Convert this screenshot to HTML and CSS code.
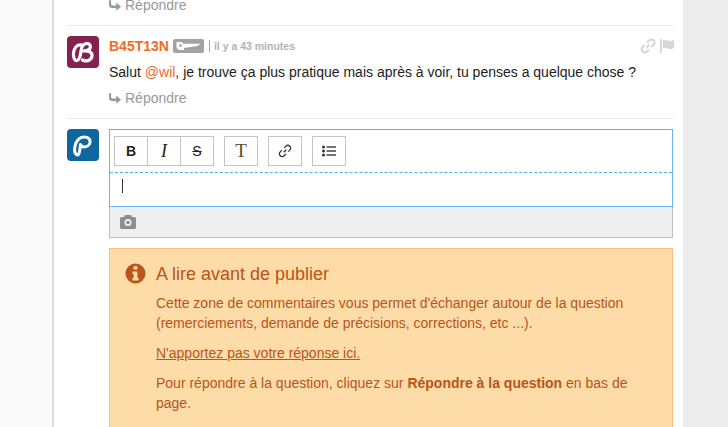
FILE: index.html
```html
<!DOCTYPE html>
<html lang="fr">
<head>
<meta charset="utf-8">
<title>Commentaires</title>
<link rel="stylesheet" href="styles.css">
</head>
<body>
<div class="page">
  <div class="gutter"></div>
  <main class="main">
    <div class="prev-reply">
      <a class="reply"><svg class="reply-icon" viewBox="0 0 14 12"><path d="M0 0h2.500v4.500q0 1.500 1.500 1.500h4.500V2.500L14 7.500l-5.500 4.500V8.800H3.500Q0 8.800 0 5.500z"/></svg>Répondre</a>
    </div>
    <article class="comment">
      <svg class="avatar" viewBox="0 0 32 32">
        <rect width="32" height="32" rx="4" fill="#85204f"/>
        <path d="M15 9C10 8 7 12 6.500 17 6 22 8 25 10 24.500c3-.5 3.500-5.500 4-9.500.5-4 2-7.500 6-7.500s4.500 5 1 6.500c-1.500.8-3 1-4.500 1 4.500-.2 9 .5 8.500 5-.5 4.500-6 6-9.500 4" fill="none" stroke="#fff" stroke-width="3.200" stroke-linecap="round" stroke-linejoin="round"/>
      </svg>
      <div class="body">
        <div class="meta">
          <span class="author">B45T13N</span>
          <span class="badge"><svg class="saw" viewBox="0 0 24 8"><path d="M0 0h6v1.800h18L21 4 7.500 6v2H1.500V6.500H0zM3 2v3h2V2z" fill="#fff" fill-rule="evenodd"/></svg></span>
          <span class="sep"></span>
          <span class="time">il y a 43 minutes</span>
          <span class="actions">
            <svg class="act" viewBox="0 0 16 16"><path d="M6.500 9.500l3-3M7 4.500l2-2a3 3 0 0 1 4.500 4.500l-2 2M9 11.500l-2 2A3 3 0 0 1 2.500 9l2-2" fill="none" stroke="#d5d8d5" stroke-width="2"/></svg>
            <svg class="act" viewBox="0 0 16 16"><path d="M1 1h1.800v14H1zM3.800 2c3-1 4.500 1 7 1 1.500 0 3-.5 4.200-1v8c-1 .500-2.700 1-4.200 1-2.500 0-4-2-7-1z" fill="#d5d8d5"/></svg>
          </span>
        </div>
        <p class="text">Salut <a class="mention">@wil</a>, je trouve ça plus pratique mais après à voir, tu penses a quelque chose ?</p>
        <a class="reply"><svg class="reply-icon" viewBox="0 0 14 12"><path d="M0 0h2.500v4.500q0 1.500 1.500 1.500h4.500V2.500L14 7.500l-5.500 4.500V8.800H3.500Q0 8.800 0 5.500z"/></svg>Répondre</a>
      </div>
    </article>
    <section class="composer">
      <svg class="avatar" viewBox="0 0 32 32">
        <rect width="32" height="32" rx="4" fill="#0f659e"/>
        <path d="M10.500 26c-2.500-1-3.500-4.500-2.500-9 1-5 4.500-9 9-9 4 0 6.500 2 6 5.500-.5 3-3.500 4.500-6 4.500-2 0-3-1-3.500-2.500-.5 3-.5 6.500-1.500 9-.4 1-1 1.700-1.500 1.500z" fill="none" stroke="#fff" stroke-width="3" stroke-linejoin="round"/>
      </svg>
      <div class="body">
        <div class="editor">
          <div class="toolbar">
            <div class="tool-group">
              <button class="tool tool-b">B</button>
              <button class="tool tool-i">I</button>
              <button class="tool tool-s">S</button>
            </div>
            <div class="tool-group"><button class="tool tool-t">T</button></div>
            <div class="tool-group">
              <button class="tool"><svg class="tool-icon" viewBox="0 0 16 16"><path d="M6.500 9.500l3-3M7 4.500l2-2a3 3 0 0 1 4.500 4.500l-2 2M9 11.500l-2 2A3 3 0 0 1 2.500 9l2-2" fill="none" stroke="#333" stroke-width="1.500"/><path d="M7.500 4l1-1M12 8.500l1-1" stroke="#c97a1d" stroke-width="1"/></svg></button>
            </div>
            <div class="tool-group">
              <button class="tool"><svg class="tool-icon" viewBox="0 0 14 12"><path d="M4.500 1.200H14v1.600H4.500zM4.500 5.200H14v1.600H4.500zM4.500 9.200H14v1.600H4.500z" fill="#444"/><circle cx="1.500" cy="2" r="1.500" fill="#333"/><circle cx="1.500" cy="6" r="1.500" fill="#333"/><circle cx="1.500" cy="10" r="1.500" fill="#333"/></svg></button>
            </div>
          </div>
          <div class="input"><span class="caret"></span></div>
        </div>
        <div class="upload">
          <svg class="camera" viewBox="0 0 16 14"><path fill-rule="evenodd" d="M5 0h6l1 2h2.500Q16 2 16 3.500v9q0 1.500-1.500 1.500h-13Q0 14 0 12.500v-9Q0 2 1.500 2H4zM8 4a3.500 3.500 0 1 0 0 7 3.500 3.500 0 0 0 0-7zm0 1.700a1.800 1.800 0 1 1 0 3.600 1.800 1.800 0 0 1 0-3.600z" fill="#8e8e8e"/></svg>
        </div>
        <div class="notice">
          <svg class="notice-icon" viewBox="0 0 22 22">
            <circle cx="11" cy="11" r="10.500" fill="#b9541a"/>
            <path d="M9 3.500h4v3.300H9zM7.800 8.800H13V15.500h1.300v2.800H7.800v-2.800H9v-4H7.800z" fill="#fddca8"/>
          </svg>
          <div class="notice-body">
            <h2 class="notice-title">A lire avant de publier</h2>
            <p class="notice-text">Cette zone de commentaires vous permet d'échanger autour de la question (remerciements, demande de précisions, corrections, etc ...).</p>
            <p class="notice-text"><u>N'apportez pas votre réponse ici.</u></p>
            <p class="notice-text">Pour répondre à la question, cliquez sur <strong>Répondre à la question</strong> en bas de page.</p>
          </div>
        </div>
      </div>
    </section>
  </main>
  <div class="aside"></div>
</div>
</body>
</html>
```
FILE: styles.css
```css
html, body {
  margin: 0;
  height: 427px;
  overflow: hidden;
  background: #fff;
}
body {
  font-family: "Liberation Sans", Arial, sans-serif;
  font-size: 14px;
  color: #222;
}
.page {
  display: flex;
  height: 427px;
  overflow: hidden;
}
.gutter {
  width: 52px;
  flex: none;
  background: #f9f9f9;
  border-right: 2px solid #dcdcdc;
}
.aside {
  width: 45px;
  flex: none;
  background: #ececec;
}
.main {
  flex: 1;
  min-width: 0;
  padding: 0 10px 0 13px;
  background: #fff;
}
.prev-reply {
  height: 30px;
  margin-top: -5px;
  padding-left: 42px;
  border-bottom: 1px solid #e8e8e8;
}
.reply {
  display: flex;
  align-items: center;
  height: 20px;
  font-size: 14px;
  color: #999;
}
.reply-icon {
  width: 12px;
  height: 11px;
  margin-right: 4px;
  fill: #9a9a9a;
}
.comment {
  display: flex;
  gap: 10px;
  padding: 10px 0 10px;
  height: 72px;
  border-bottom: 1px solid #e8e8e8;
}
.avatar {
  width: 32px;
  height: 32px;
  flex: none;
}
.body {
  flex: 1;
  min-width: 0;
}
.meta {
  display: flex;
  align-items: center;
  height: 20px;
}
.author {
  font-size: 14px;
  font-weight: 700;
  color: #f36a21;
}
.badge {
  display: flex;
  align-items: center;
  justify-content: center;
  width: 31px;
  height: 14px;
  margin-left: 4px;
  background: #a3a3a3;
  border-radius: 2px;
}
.saw {
  width: 25px;
  height: 8px;
}
.sep {
  width: 1px;
  height: 12px;
  margin: 0 4px 0 5px;
  background: #aaa;
}
.time {
  font-size: 10.5px;
  font-weight: 700;
  color: #b2b2b2;
}
.actions {
  display: flex;
  gap: 3px;
  margin-left: auto;
  margin-right: -2px;
}
.act {
  width: 16px;
  height: 16px;
}
.text {
  margin: 6px 0 6px;
  line-height: 20px;
  font-size: 14px;
  color: #222;
}
.mention {
  color: #f36a21;
}
.composer {
  display: flex;
  gap: 10px;
  padding-top: 10px;
}
.editor {
  border: 1px solid #6cb2e8;
  height: 76px;
}
.toolbar {
  display: flex;
  gap: 10px;
  height: 43px;
  padding: 6px 4px;
  box-sizing: border-box;
  border-bottom: 1px dashed #53aee9;
}
.tool-group {
  display: flex;
}
.tool {
  display: flex;
  align-items: center;
  justify-content: center;
  width: 34px;
  height: 30px;
  margin: 0;
  padding: 0;
  background: #fff;
  border: 1px solid #c4c4c4;
  color: #222;
  font-size: 14px;
}
.tool + .tool {
  margin-left: -1px;
}
.tool-b {
  font-family: "Liberation Sans", Arial, sans-serif;
  font-weight: 700;
}
.tool-i {
  font-family: "Liberation Serif", serif;
  font-style: italic;
  font-size: 18px;
}
.tool-s {
  font-family: "Liberation Sans", Arial, sans-serif;
  text-decoration: line-through;
}
.tool-t {
  font-family: "Liberation Serif", serif;
  font-size: 19px;
  color: #5a4a20;
}
.tool-icon {
  width: 14px;
  height: 14px;
}
.input {
  display: flex;
  align-items: center;
  height: 26px;
  padding: 0 0 6px 12px;
}
.caret {
  width: 1px;
  height: 14px;
  background: #333;
}
.upload {
  display: flex;
  align-items: center;
  height: 30px;
  padding-left: 10px;
  background: #efefef;
  border: 1px solid #c0c0c0;
  border-top: 0;
}
.camera {
  width: 16px;
  height: 14px;
}
.notice {
  display: flex;
  gap: 10px;
  margin-top: 10px;
  padding: 14px 15px 30px;
  background: #fddca8;
  border: 1px solid #fbbd80;
  color: #b9541a;
}
.notice-icon {
  width: 21px;
  height: 21px;
  flex: none;
}
.notice-body {
  flex: 1;
  min-width: 0;
}
.notice-title {
  margin: 0 0 8px;
  font-size: 18px;
  font-weight: 400;
  line-height: 22px;
}
.notice-text {
  margin: 0 0 10px;
  font-size: 14px;
  line-height: 20px;
}
```
